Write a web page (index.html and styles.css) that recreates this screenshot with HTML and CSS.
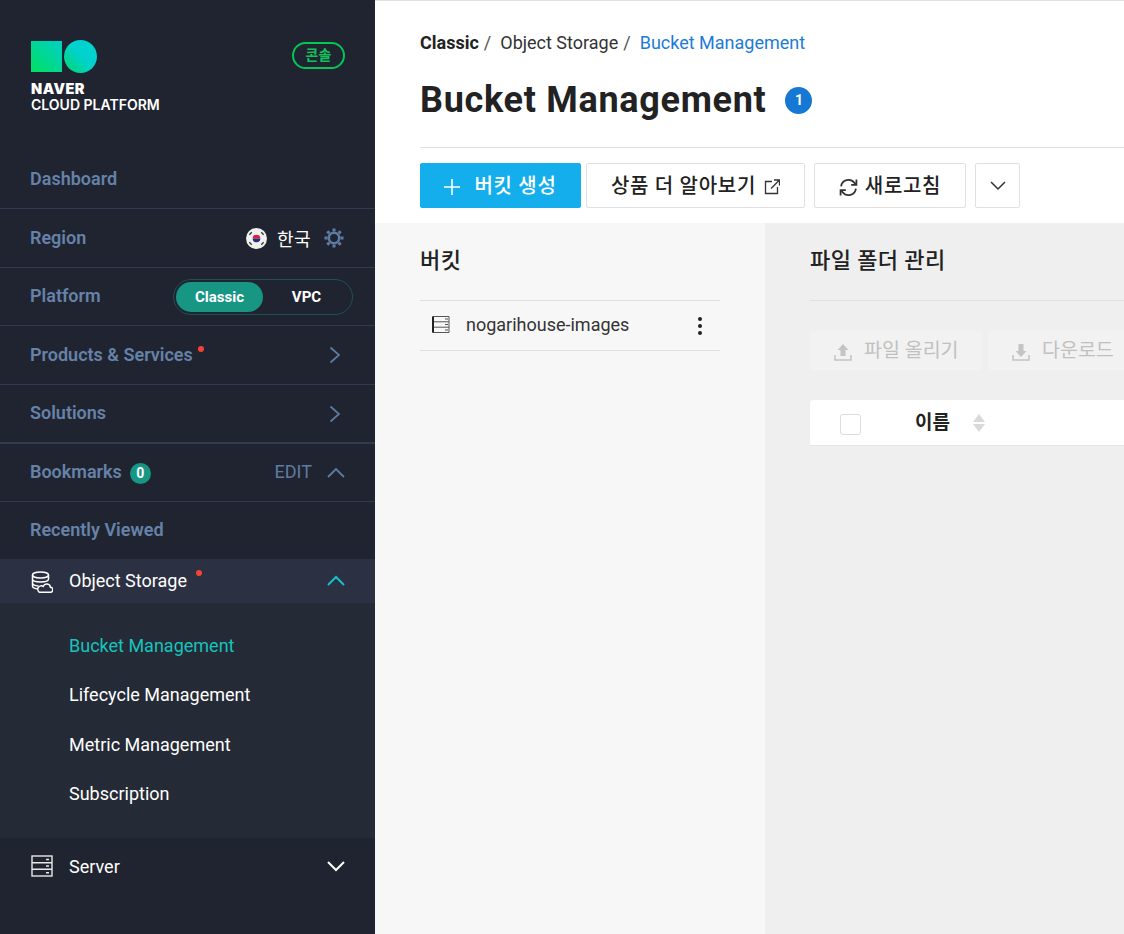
FILE: index.html
```html
<!DOCTYPE html>
<html lang="ko">
<head>
<meta charset="utf-8">
<title>Bucket Management</title>
<link rel="stylesheet" href="styles.css">
</head>
<body>
<aside class="sidebar">
  <div class="brand">
    <div class="logo">
      <div class="logo-marks"><span class="logo-square"></span><span class="logo-circle"></span></div>
      <div class="logo-naver">NAVER</div>
      <div class="logo-cloud">CLOUD PLATFORM</div>
    </div>
    <span class="console-badge">콘솔</span>
  </div>
  <nav class="nav">
    <div class="nav-row"><span class="nav-label">Dashboard</span></div>
    <div class="nav-row">
      <span class="nav-label">Region</span>
      <span class="region">
        <svg class="flag" viewBox="0 0 22 22" width="21" height="21"><circle cx="11" cy="11" r="11" fill="#f0f0f0"/><path d="M7 11a4 4 0 0 1 8 0z" fill="#d8203c"/><path d="M7 11a4 4 0 0 0 8 0z" fill="#25307a"/><g stroke="#333" stroke-width="1.4"><path d="M3.5 7l2.5-2.5M16 4.500l2.500 2.500M3.500 15l2.500 2.500M16 17.500l2.500-2.500"/></g></svg>
        <span class="region-name">한국</span>
        <svg class="gear" viewBox="0 0 20 20" width="20" height="20"><circle cx="10" cy="10" r="5.200" fill="none" stroke="#5f7ba3" stroke-width="2.600"/><g stroke="#5f7ba3" stroke-width="3"><path d="M10 0.500v3M10 16.500v3M0.500 10h3M16.500 10h3M3.300 3.300l2.100 2.100M14.600 14.600l2.100 2.100M3.300 16.700l2.100-2.100M14.600 5.400l2.100-2.100"/></g></svg>
      </span>
    </div>
    <div class="nav-row row-58">
      <span class="nav-label">Platform</span>
      <span class="platform-toggle"><span class="toggle-on">Classic</span><span class="toggle-off">VPC</span></span>
    </div>
    <div class="nav-row">
      <span class="nav-label has-dot">Products &amp; Services<i class="dot"></i></span>
      <svg class="chev chev-right" viewBox="0 0 12 18" width="12" height="18"><path d="M1.500 1.500L10 9l-8.500 7.500" fill="none" stroke="#5f7ba3" stroke-width="1.700"/></svg>
    </div>
    <div class="nav-row thick">
      <span class="nav-label">Solutions</span>
      <svg class="chev chev-right" viewBox="0 0 12 18" width="12" height="18"><path d="M1.500 1.500L10 9l-8.500 7.500" fill="none" stroke="#5f7ba3" stroke-width="1.700"/></svg>
    </div>
    <div class="nav-row row-58">
      <span class="nav-label bookmarks">Bookmarks<span class="count">0</span></span>
      <span class="edit-group">
        <span class="edit">EDIT</span>
        <svg viewBox="0 0 18 11" width="18" height="11"><path d="M1 10L9 2l8 8" fill="none" stroke="#5f7ba3" stroke-width="1.800"/></svg>
      </span>
    </div>
    <div class="nav-row flat"><span class="nav-label">Recently Viewed</span></div>
    <div class="service active">
      <span class="service-name">
        <svg class="service-icon" viewBox="0 0 22 22" width="22" height="22" fill="none" stroke="#fff" stroke-width="1.500"><ellipse cx="9.500" cy="4" rx="8" ry="3"/><path d="M1.500 4v11c0 1.500 3 2.800 6 3M1.500 8c0 1.700 3.500 3 8 3s8-1.300 8-3V4M1.500 12c0 1.500 2.500 2.700 6 3"/><path d="M8.500 21.300h10.500a2.500 2.500 0 0 0 .5-5 3.800 3.800 0 0 0-7.300-1 3 3 0 0 0-3.700 6z" fill="#2b3142"/></svg>
        Object Storage<i class="dot dot-service"></i>
      </span>
      <svg viewBox="0 0 18 11" width="18" height="11"><path d="M1 10L9 2l8 8" fill="none" stroke="#16c0c4" stroke-width="2"/></svg>
    </div>
    <ul class="submenu">
      <li class="current">Bucket Management</li>
      <li>Lifecycle Management</li>
      <li>Metric Management</li>
      <li>Subscription</li>
    </ul>
    <div class="service">
      <span class="service-name">
        <svg class="service-icon" viewBox="0 0 22 22" width="22" height="22" fill="none" stroke="#e8e8e8" stroke-width="1.400"><rect x="1" y="1" width="20" height="20"/><path d="M1 7.700h20M1 14.300h20"/><path d="M15 4.500h3M15 11h3M15 17.700h3"/></svg>
        Server
      </span>
      <svg viewBox="0 0 18 11" width="18" height="11"><path d="M1 1l8 8 8-8" fill="none" stroke="#fff" stroke-width="2"/></svg>
    </div>
  </nav>
</aside>
<main class="main">
  <header class="page-head">
    <div class="crumbs">
      <b>Classic</b><span class="sep">/</span><span>Object Storage</span><span class="sep">/</span><span class="crumb-now">Bucket Management</span>
    </div>
    <div class="title-row">
      <h1>Bucket Management</h1>
      <span class="title-count">1</span>
    </div>
    <div class="actions">
      <button class="btn primary">
        <svg viewBox="0 0 16 16" width="16" height="16"><path d="M8 0v16M0 8h16" stroke="#fff" stroke-width="1.600"/></svg>
        버킷 생성
      </button>
      <button class="btn learn">상품 더 알아보기
        <svg viewBox="0 0 16 16" width="16" height="16" fill="none" stroke="#333" stroke-width="1.300"><path d="M8 2.500H1.500v12h12V8M7 9.500L15 1.500M10 1h5.500v5.500"/></svg>
      </button>
      <button class="btn refresh">
        <svg viewBox="0 0 18 18" width="19" height="19" fill="none" stroke="#333" stroke-width="1.700"><path d="M2 8a7 7 0 0 1 12.500-3.500L16 6.500M16.500 1.500v5h-5M16 10a7 7 0 0 1-12.500 3.500L2 11.500M1.500 16.500v-5h5"/></svg>
        새로고침
      </button>
      <button class="btn more">
        <svg viewBox="0 0 16 10" width="16" height="10"><path d="M1 1l7 7 7-7" fill="none" stroke="#333" stroke-width="1.500"/></svg>
      </button>
    </div>
  </header>
  <div class="panels">
    <section class="bucket-panel">
      <h2>버킷</h2>
      <div class="bucket-row">
        <svg class="bucket-icon" viewBox="0 0 18 17" width="18" height="17" fill="none" stroke="#555" stroke-width="1"><path d="M1 .500h16v16H1z"/><path d="M1 5.800h16M1 11.200h16"/><path d="M1 .500v16" stroke="#222" stroke-width="2"/><path d="M13 3h3M13 8.500h3M13 14h3"/></svg>
        <span class="bucket-name">nogarihouse-images</span>
        <span class="kebab"><i></i><i></i><i></i></span>
      </div>
    </section>
    <section class="file-panel">
      <h2>파일 폴더 관리</h2>
      <div class="file-actions">
        <span class="file-btn upload">
          <svg viewBox="0 0 18 18" width="18" height="18"><path d="M9 1l5.500 6H11.500v6h-5V7H3.500z" fill="#c4c4c4"/><path d="M1 12v5h16v-5" fill="none" stroke="#c4c4c4" stroke-width="1.500"/></svg>
          파일 올리기
        </span>
        <span class="file-btn download">
          <svg viewBox="0 0 18 18" width="18" height="18"><path d="M9 14l5.500-6H11.500V1h-5v7H3.500z" fill="#c4c4c4"/><path d="M1 12v5h16v-5" fill="none" stroke="#c4c4c4" stroke-width="1.500"/></svg>
          다운로드
        </span>
      </div>
      <div class="table-head">
        <span class="checkbox"></span>
        <span class="col-name">이름</span>
        <span class="sort"><i class="up"></i><i class="down"></i></span>
      </div>
    </section>
  </div>
</main>
</body>
</html>
```
FILE: styles.css
```css
* { box-sizing: border-box; }
html, body { margin: 0; height: 100%; }
body {
  display: flex;
  width: 1124px;
  height: 934px;
  overflow: hidden;
  font-family: Roboto, "Noto Sans CJK KR", sans-serif;
  color: #222;
  background: #fff;
}
.sidebar {
  flex: 0 0 375px;
  height: 934px;
  background: #1f2430;
  display: flex;
  flex-direction: column;
}
.brand {
  height: 150px;
  padding: 40px 30px 0 31px;
  display: flex;
  justify-content: space-between;
  align-items: flex-start;
}
.logo-marks { display: flex; align-items: center; gap: 2px; height: 33px; }
.logo-square { width: 31px; height: 31px; background: linear-gradient(45deg, #00e060, #00cfc8); }
.logo-circle { width: 33px; height: 33px; border-radius: 50%; background: linear-gradient(225deg, #00d2d0 45%, #00d86a 100%); }
.logo-naver, .logo-cloud { font-family: Inter, sans-serif; color: #fff; font-size: 14px; line-height: 16px; }
.logo-naver { font-weight: 900; margin-top: 8px; font-size: 14.500px; letter-spacing: 0.500px; }
.logo-cloud { font-weight: 600; }
.console-badge {
  margin-top: 2px;
  width: 53px;
  height: 27px;
  border: 2px solid #00c853;
  border-radius: 14px;
  color: #12c05c;
  font-size: 14px;
  font-weight: 700;
  line-height: 23px;
  text-align: center;
}
.nav { display: flex; flex-direction: column; flex: 1; }
.nav-row {
  height: 59px;
  padding: 0 30px;
  display: flex;
  align-items: center;
  justify-content: space-between;
  border-bottom: 1px solid #323a50;
}
.nav-row.row-58 { height: 58px; }
.nav-row.thick { border-bottom-width: 2px; }
.nav-row.flat { border-bottom: 0; height: 57px; }
.nav-label { font-size: 18px; font-weight: 600; color: #6682a8; position: relative; margin-top: -2px; }
.dot { position: absolute; width: 6px; height: 6px; border-radius: 50%; background: #f44336; }
.has-dot .dot { right: -11px; top: 2px; }
.region { display: flex; align-items: center; }
.flag { margin-right: 10px; }
.region-name { font-size: 18px; letter-spacing: 0.500px; color: #fff; margin-right: 13px; }
.gear { margin-right: 1px; }
.platform-toggle {
  width: 180px;
  height: 36px;
  margin-right: -8px;
  border: 1px solid #1f4f52;
  border-radius: 18px;
  padding: 2px;
  display: flex;
  align-items: center;
  font-size: 15px;
  font-weight: 700;
  color: #fff;
}
.toggle-on { width: 87px; height: 30px; line-height: 30px; border-radius: 15px; background: #169683; text-align: center; }
.toggle-off { flex: 1; text-align: center; }
.chev-right { margin-right: 4px; }
.bookmarks { display: flex; align-items: center; }
.count {
  width: 21px; height: 21px; margin: 2px 0 -2px 8px; border-radius: 50%;
  background: #169683; color: #fff; font-size: 14px; font-weight: 700; line-height: 21px; text-align: center;
}
.edit-group { display: flex; align-items: center; gap: 15px; }
.edit { font-size: 18px; color: #5f7ba3; margin-top: -2px; }
.service {
  height: 44px;
  padding: 0 30px 0 31px;
  display: flex;
  align-items: center;
  justify-content: space-between;
  color: #fff;
  font-size: 18px;
}
.service.active { background: #2b3142; padding-bottom: 2px; }
.service:last-child { height: 58px; padding-bottom: 2px; }
.service-name { display: flex; align-items: center; position: relative; }
.service-icon { margin-right: 16px; }
.active .service-icon { margin-top: 2px; margin-bottom: -2px; }
.dot-service { left: 165px; top: 1px; }
.submenu {
  list-style: none;
  margin: 0;
  padding: 18px 0 0 69px;
  background: #242a36;
  height: 235px;
  color: #fff;
  font-size: 18px;
}
.submenu li { height: 49.330px; line-height: 49px; }
.current { color: #17c3bd; }
.main {
  flex: 1;
  min-width: 0;
  border-top: 1px solid #e0e0e0;
  display: flex;
  flex-direction: column;
}
.page-head { padding: 0 0 15px 45px; }
.crumbs { display: flex; align-items: center; height: 24px; margin-top: 29px; font-size: 18px; color: #333; }
.crumbs b { font-weight: 700; color: #222; }
.sep { margin: 0 9px 0 5px; color: #555; }
.crumb-now { color: #1e7bd8; }
.title-row {
  display: flex;
  align-items: center;
  gap: 19px;
  height: 90px;
  margin-top: 4px;
  border-bottom: 1px solid #e0e0e0;
  padding-bottom: 5px;
  margin-bottom: 15px;
}
h1 { margin: 0; font-size: 36px; letter-spacing: 0.700px; font-weight: 700; color: #222; }
.title-count {
  width: 27px; height: 27px; border-radius: 50%;
  background: #1579d3; color: #fff; font-size: 14px; font-weight: 700; line-height: 27px; text-align: center;
}
.actions { display: flex; height: 45px; }
.btn {
  height: 45px;
  border: 1px solid #e0e0e0;
  border-radius: 2px;
  background: #fff;
  font-family: inherit;
  font-size: 20px;
  letter-spacing: 0.700px;
  font-weight: 500;
  color: #222;
  display: flex;
  align-items: center;
  justify-content: center;
  padding: 0 0 2px;
}
.btn svg { margin-top: 5px; }
.primary { width: 161px; background: #14aeec; border-color: #14aeec; color: #fff; gap: 14px; margin-right: 5px; }
.learn { width: 219px; gap: 8px; margin-right: 9px; }
.refresh { width: 152px; gap: 7px; margin-right: 9px; }
.more { width: 45px; padding: 0; }
.more svg { margin-top: 0; }
.panels { flex: 1; display: flex; min-height: 0; }
.bucket-panel { flex: 0 0 390px; background: #f7f7f7; padding: 0 45px; }
.file-panel { flex: 1; min-width: 0; background: #efefef; padding-left: 45px; }
h2 {
  margin: 0;
  height: 78px;
  border-bottom: 1px solid #e0e0e0;
  font-size: 22px;
  letter-spacing: 0.400px;
  font-weight: 500;
  line-height: 75px;
  color: #222;
}
.bucket-row {
  height: 50px;
  border-bottom: 1px solid #e0e0e0;
  display: flex;
  align-items: center;
  padding: 0 18px 2px 12px;
}
.bucket-icon { margin-right: 16px; }
.bucket-name { font-size: 18px; flex: 1; color: #333; }
.kebab { display: flex; flex-direction: column; gap: 3px; margin-top: 2px; }
.kebab i { width: 4px; height: 4px; border-radius: 50%; background: #222; }
.file-actions { display: flex; gap: 6px; margin-top: 30px; height: 39px; white-space: nowrap; }
.file-btn {
  height: 39px;
  background: #f2f2f2;
  border-radius: 3px;
  color: #c0c0c0;
  font-size: 19.500px;
  display: flex;
  align-items: center;
  gap: 12px;
  padding: 0 0 4px 24px;
}
.file-btn svg { margin-top: 6px; }
.upload { width: 172px; flex: none; }
.download { width: 170px; flex: none; }
.table-head {
  margin-top: 30px;
  height: 46px;
  background: #fff;
  border-bottom: 1px solid #e6e6e6;
  border-radius: 3px 0 0 0;
  display: flex;
  align-items: center;
}
.checkbox {
  width: 21px; height: 21px; margin-left: 30px; margin-top: 3px;
  border: 1px solid #dcdcdc; border-radius: 3px; background: #fff;
}
.col-name { margin-left: 54px; font-size: 19px; font-weight: 700; color: #222; margin-top: -5px; }
.sort { margin-left: 23px; display: flex; flex-direction: column; gap: 2px; }
.sort i { width: 0; height: 0; border-left: 6px solid transparent; border-right: 6px solid transparent; }
.sort .up { border-bottom: 8px solid #d9d9d9; }
.sort .down { border-top: 8px solid #d9d9d9; }
```
